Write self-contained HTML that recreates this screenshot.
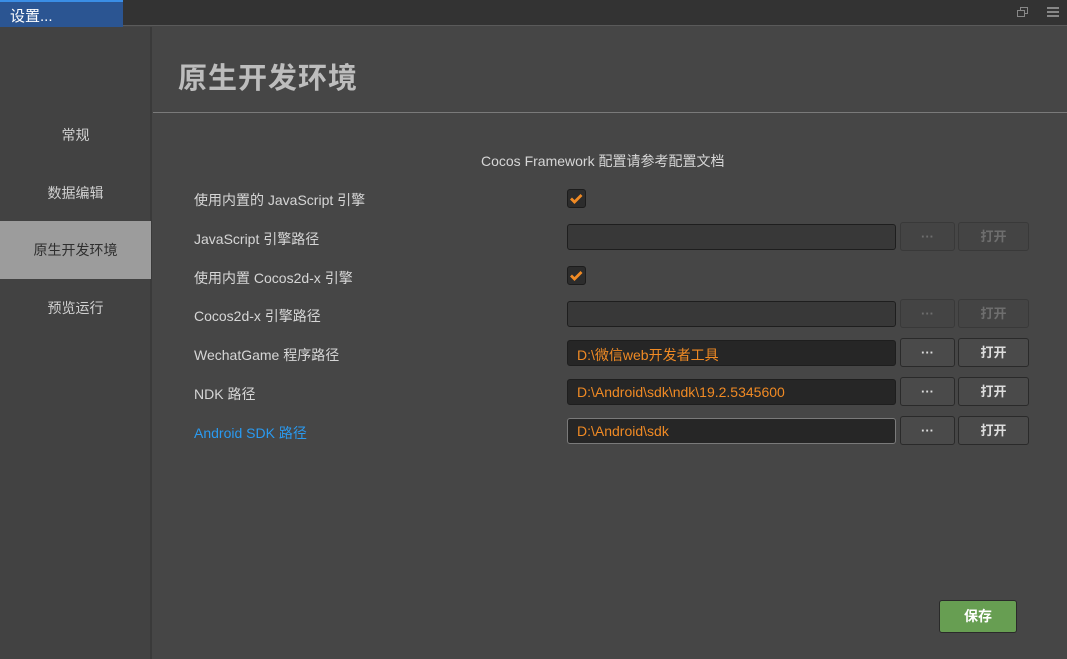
<!DOCTYPE html>
<html><head><meta charset="utf-8"><style>
*{margin:0;padding:0;box-sizing:border-box}
body{width:1067px;height:659px;background:#464646;font-family:"Liberation Sans","Noto Sans CJK SC",sans-serif;font-size:14px;color:#d6d6d6;position:relative;overflow:hidden}
.abs{position:absolute}
.top{left:0;top:0;width:1067px;height:26px;background:#333;border-bottom:1px solid #5a5a5a}
.tab{left:0;top:0;width:123px;height:27px;background:#2b5592;border-top:2px solid #3a8ee6;color:#fff;font-size:15px;padding:3px 0 0 10px}
.side{left:0;top:27px;width:152px;height:632px;background:#424242;border-right:2px solid #3a3a3a}
.si{position:absolute;left:0;width:151px;height:58px;line-height:58px;text-align:center;color:#d0d0d0;font-size:14px}
.sel{background:#9c9c9c;color:#2e2e2e}
h1{position:absolute;left:178px;top:55px;font-size:29px;color:#bdbdbd;font-weight:bold;letter-spacing:1px}
.hl{left:153px;top:112px;width:914px;height:1px;background:#7a7a7a}
.lbl{position:absolute;left:194px;font-size:14px;color:#d6d6d6}
.cb{position:absolute;left:567px;width:19px;height:19px;background:#2c2c2c;border:1px solid #1c1c1c;border-radius:3px}
.in{position:absolute;left:567px;width:329px;height:26px;background:#383838;border:1px solid #1e1e1e;border-radius:3px;color:#f08a24;font-size:14px;padding:4px 0 0 9px}
.in.d{background:#262626}
.b1,.b2{position:absolute;height:29px;border:1px solid #2a2a2a;border-radius:3px;background:#4a4a4a;color:#ddd;font-weight:bold;text-align:center;line-height:27px;font-size:13px}
.b1{left:900px;width:55px}.b2{left:958px;width:71px}
.dis{background:#444;border-color:#393939;color:#6e6e6e}
</style></head><body>
<div class="abs top"></div>
<div class="abs tab">设置...</div>
<svg class="abs" style="left:1016px;top:6px" width="14" height="13" viewBox="0 0 14 13"><rect x="4.5" y="1.5" width="7" height="6" fill="none" stroke="#888"/><rect x="1.5" y="4.5" width="7" height="6" fill="#333" stroke="#888"/></svg>
<svg class="abs" style="left:1047px;top:7px" width="13" height="10"><rect y="0" width="12" height="2" fill="#888"/><rect y="4" width="12" height="2" fill="#888"/><rect y="8" width="12" height="2" fill="#888"/></svg>
<div class="abs side">
<div class="si" style="top:79px">常规</div>
<div class="si" style="top:137px">数据编辑</div>
<div class="si sel" style="top:194px">原生开发环境</div>
<div class="si" style="top:252px">预览运行</div>
</div>
<h1>原生开发环境</h1>
<div class="abs hl"></div>
<div class="abs" style="left:481px;top:151px;font-size:14px;color:#d6d6d6">Cocos Framework 配置请参考配置文档</div>

<div class="lbl" style="top:190px">使用内置的 JavaScript 引擎</div>
<div class="cb" style="top:189px"><svg width="17" height="17" viewBox="0 0 17 17"><path d="M3 8.5l3.5 3.5 7-7" fill="none" stroke="#f08a24" stroke-width="2.8"/></svg></div>

<div class="lbl" style="top:229px">JavaScript 引擎路径</div>
<div class="in" style="top:224px"></div>
<div class="b1 dis" style="top:222px">···</div><div class="b2 dis" style="top:222px">打开</div>

<div class="lbl" style="top:268px">使用内置 Cocos2d-x 引擎</div>
<div class="cb" style="top:266px"><svg width="17" height="17" viewBox="0 0 17 17"><path d="M3 8.5l3.5 3.5 7-7" fill="none" stroke="#f08a24" stroke-width="2.8"/></svg></div>

<div class="lbl" style="top:306px">Cocos2d-x 引擎路径</div>
<div class="in" style="top:301px"></div>
<div class="b1 dis" style="top:299px">···</div><div class="b2 dis" style="top:299px">打开</div>

<div class="lbl" style="top:345px">WechatGame 程序路径</div>
<div class="in d" style="top:340px">D:\微信web开发者工具</div>
<div class="b1" style="top:338px">···</div><div class="b2" style="top:338px">打开</div>

<div class="lbl" style="top:384px">NDK 路径</div>
<div class="in d" style="top:379px">D:\Android\sdk\ndk\19.2.5345600</div>
<div class="b1" style="top:377px">···</div><div class="b2" style="top:377px">打开</div>

<div class="lbl" style="top:423px;color:#2a9af0">Android SDK 路径</div>
<div class="in d" style="top:418px;border-color:#7a7a7a">D:\Android\sdk</div>
<div class="b1" style="top:416px">···</div><div class="b2" style="top:416px">打开</div>

<div class="abs" style="left:939px;top:600px;width:78px;height:33px;background:#679e52;border:1px solid #2a2a2a;border-radius:3px;color:#fff;font-weight:bold;text-align:center;line-height:31px;font-size:14px">保存</div>
</body></html>
